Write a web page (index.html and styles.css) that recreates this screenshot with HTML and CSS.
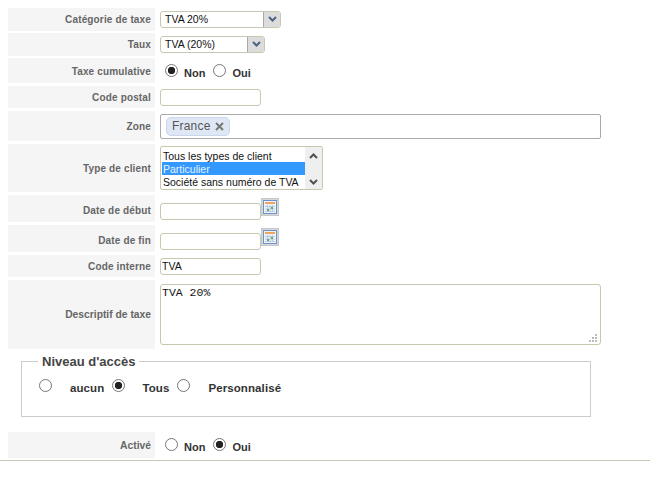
FILE: index.html
```html
<!DOCTYPE html>
<html lang="fr">
<head>
    <meta charset="UTF-8">
    <meta name="viewport" content="width=device-width, initial-scale=1.0">
    <title>Taxe</title>
    <link rel="stylesheet" href="styles.css">
</head>
<body>
    <form class="tax-form">
        <div class="row row-1">
            <label class="row-label">Catégorie de taxe</label>
            <div class="row-field">
                <div class="select select-wide"><span>TVA 20%</span>
                    <span class="select-arrow"><svg width="9" height="6" viewBox="0 0 9 6"><path d="M1 1l3.500 3.500L8 1" fill="none" stroke="#4d6185" stroke-width="2"/></svg></span>
                </div>
            </div>
        </div>
        <div class="row row-2">
            <label class="row-label">Taux</label>
            <div class="row-field">
                <div class="select select-narrow"><span>TVA (20%)</span>
                    <span class="select-arrow"><svg width="9" height="6" viewBox="0 0 9 6"><path d="M1 1l3.500 3.500L8 1" fill="none" stroke="#4d6185" stroke-width="2"/></svg></span>
                </div>
            </div>
        </div>
        <div class="row row-3">
            <label class="row-label">Taxe cumulative</label>
            <div class="row-field radios">
                <input type="radio" name="cumul" checked><span class="radio-text">Non</span>
                <input type="radio" name="cumul"><span class="radio-text">Oui</span>
            </div>
        </div>
        <div class="row row-4">
            <label class="row-label">Code postal</label>
            <div class="row-field"><input class="text-input" type="text"></div>
        </div>
        <div class="row row-5">
            <label class="row-label">Zone</label>
            <div class="row-field">
                <div class="tag-box">
                    <span class="tag">France <svg width="9" height="9" viewBox="0 0 9 9"><path d="M1 1l7 7M8 1l-7 7" stroke="#777" stroke-width="2"/></svg></span>
                </div>
            </div>
        </div>
        <div class="row row-6">
            <label class="row-label">Type de client</label>
            <div class="row-field">
                <div class="listbox">
                    <div class="list-items">
                        <div class="list-item">Tous les types de client</div>
                        <div class="list-item selected">Particulier</div>
                        <div class="list-item">Société sans numéro de TVA</div>
                    </div>
                    <div class="list-scroll">
                        <svg width="9" height="6" viewBox="0 0 9 6"><path d="M1 5l3.500-3.500L8 5" fill="none" stroke="#505050" stroke-width="2"/></svg>
                        <svg width="9" height="6" viewBox="0 0 9 6"><path d="M1 1l3.500 3.500L8 1" fill="none" stroke="#505050" stroke-width="2"/></svg>
                    </div>
                </div>
            </div>
        </div>
        <div class="row row-7">
            <label class="row-label">Date de début</label>
            <div class="row-field date-field">
                <input class="text-input" type="text">
                <span class="cal-btn"><svg width="14" height="14" viewBox="0 0 14 14"><rect x=".5" y=".5" width="13" height="13" fill="#eef3fa" stroke="#6b93c9"/><rect x="2" y="2" width="10" height="2" fill="#f2a65a"/><path d="M2 6.500h10M2 9h10M2 11.500h10M4.500 5v7M7 5v7M9.500 5v7" stroke="#b9cbe2"/><rect x="4" y="9" width="2" height="2" fill="#6aa86a"/><rect x="8" y="7" width="2" height="2" fill="#6aa86a"/></svg></span>
            </div>
        </div>
        <div class="row row-8">
            <label class="row-label">Date de fin</label>
            <div class="row-field date-field">
                <input class="text-input" type="text">
                <span class="cal-btn"><svg width="14" height="14" viewBox="0 0 14 14"><rect x=".5" y=".5" width="13" height="13" fill="#eef3fa" stroke="#6b93c9"/><rect x="2" y="2" width="10" height="2" fill="#f2a65a"/><path d="M2 6.500h10M2 9h10M2 11.500h10M4.500 5v7M7 5v7M9.500 5v7" stroke="#b9cbe2"/><rect x="4" y="9" width="2" height="2" fill="#6aa86a"/><rect x="8" y="7" width="2" height="2" fill="#6aa86a"/></svg></span>
            </div>
        </div>
        <div class="row row-9">
            <label class="row-label">Code interne</label>
            <div class="row-field"><input class="text-input" type="text" value="TVA"></div>
        </div>
        <div class="row row-10">
            <label class="row-label label-small">Descriptif de taxe</label>
            <div class="row-field area-wrap">
                <textarea class="text-area">TVA 20%</textarea>
                <svg class="area-grip" width="8" height="8" viewBox="0 0 8 8"><path d="M6 0h2v2H6zM3 3h2v2H3zM6 3h2v2H6zM0 6h2v2H0zM3 6h2v2H3zM6 6h2v2H6z" fill="#bbb"/></svg>
            </div>
        </div>

        <fieldset class="access">
            <legend>Niveau d'accès</legend>
            <div class="access-options">
                <input type="radio" name="access"><span class="access-text access-none">aucun</span>
                <input type="radio" name="access" checked><span class="access-text access-all">Tous</span>
                <input type="radio" name="access"><span class="access-text access-custom">Personnalisé</span>
            </div>
        </fieldset>

        <div class="row row-11">
            <label class="row-label label-small">Activé</label>
            <div class="row-field radios">
                <input type="radio" name="active"><span class="radio-text">Non</span>
                <input type="radio" name="active" checked><span class="radio-text">Oui</span>
            </div>
        </div>
    </form>
    <div class="bottom-line"></div>
</body>
</html>
```

FILE: styles.css
```css
body {
    margin: 0;
    padding: 0;
    background-color: #fff;
    font-family: "Liberation Sans", Arial, sans-serif;
    font-size: 12px;
    color: #333;
}

.tax-form {
    padding: 8px 0 0 8px;
}

.row {
    display: flex;
    margin-bottom: 3px;
}

.row-1 { height: 23px; margin-bottom: 2px; }
.row-2 { height: 23px; margin-bottom: 2px; }
.row-3 { height: 25px; }
.row-4 { height: 22px; }
.row-5 { height: 30px; }
.row-6 { height: 48px; }
.row-7 { height: 27px; }
.row-8 { height: 27px; }
.row-9 { height: 22px; }
.row-10 { height: 69px; margin-bottom: 0; }
.row-11 { height: 26px; margin-bottom: 0; }

.row-label {
    width: 143px;
    padding-right: 4px;
    background-color: #f5f5f5;
    color: #666;
    font-size: 10px;
    font-weight: bold;
    letter-spacing: 0.15px;
    text-align: right;
    display: flex;
    align-items: center;
    justify-content: flex-end;
}

.row-3 .row-label { padding-top: 2px; height: 23px; }
.row-7 .row-label,
.row-8 .row-label { padding-top: 3px; height: 24px; }

.label-small {
    font-size: 10.3px;
    letter-spacing: 0;
}

.row-field {
    margin-left: 5px;
    display: flex;
    align-items: center;
}

.select {
    height: 15px;
    display: flex;
    align-items: stretch;
    justify-content: space-between;
    border: 1px solid #c8c8b0;
    border-radius: 3px;
    padding-left: 4px;
    color: #111;
    font-size: 10.5px;
    line-height: 15px;
    background-color: #fff;
}

.select-wide { width: 115px; margin-top: -1px; }
.select-narrow { width: 99px; margin-top: -1px; }

.select-arrow {
    width: 16px;
    display: flex;
    align-items: center;
    justify-content: center;
    background-color: #dcdcdc;
    border-left: 1px solid #aaa;
}

.radios input,
.access-options input {
    appearance: none;
    width: 13px;
    height: 13px;
    margin: 0;
    border: 1px solid #767676;
    border-radius: 50%;
    background-color: #fff;
    flex-shrink: 0;
}

.radios input:checked,
.access-options input:checked {
    background: radial-gradient(circle, #222 0, #222 3.4px, #fff 4px);
}

.radios {
    padding-left: 5px;
}

.row-3 .radios {
    padding-top: 2px;
}

.radios input {
    position: relative;
    top: -1px;
}

.radio-text {
    margin: 3px 8px 0 6px;
    font-size: 11px;
    font-weight: bold;
    color: #333;
}

.text-input {
    width: 98px;
    height: 15px;
    padding: 0 0 0 1px;
    border: 1px solid #c8c8b0;
    border-radius: 3px;
    font-family: inherit;
    font-size: 10.5px;
    color: #111;
    outline: none;
}

.tag-box {
    width: 434px;
    height: 23px;
    display: flex;
    align-items: center;
    padding-left: 5px;
    border: 1px solid #aaa;
    border-radius: 2px;
}

.tag {
    height: 17px;
    padding: 0 5px;
    display: flex;
    align-items: center;
    gap: 4px;
    background-color: #dfe7f5;
    border: 1px solid #c9d6ee;
    border-radius: 5px;
    font-size: 12px;
    letter-spacing: 0.2px;
    color: #555;
}

.listbox {
    width: 161px;
    height: 42px;
    display: flex;
    border: 1px solid #c8c8b0;
    border-radius: 2px;
    margin-top: -1px;
}

.list-items {
    width: 143px;
    padding: 2px 0 0 1px;
}

.list-item {
    height: 13px;
    line-height: 15px;
    padding-left: 1px;
    font-size: 10.5px;
    color: #111;
    white-space: nowrap;
}

.list-item.selected {
    background-color: #3399ff;
    color: #e8f2ff;
}

.list-scroll {
    flex: 1;
    display: flex;
    flex-direction: column;
    align-items: center;
    justify-content: space-between;
    padding: 6px 0 4px;
    background-color: #efefef;
}

.date-field {
    align-items: flex-start;
}

.date-field .text-input {
    margin-top: 8px;
}

.cal-btn {
    width: 16px;
    height: 16px;
    margin-top: 3px;
    display: flex;
    align-items: center;
    justify-content: center;
    background-color: #d8d8d8;
    border: 1px solid #c8c8c8;
}

.area-wrap {
    position: relative;
    align-items: flex-start;
}

.text-area {
    display: block;
    width: 437px;
    height: 57px;
    padding: 1px;
    margin-top: 4px;
    border: 1px solid #c8c8b0;
    border-radius: 3px;
    font-family: "Liberation Mono", "Courier New", monospace;
    font-size: 11.5px;
    color: #111;
    outline: none;
    resize: none;
}

.area-grip {
    position: absolute;
    right: 4px;
    top: 54px;
}

.access {
    width: 568px;
    height: 61px;
    box-sizing: content-box;
    margin: 5px 0 15px 13px;
    padding: 0;
    border: 1px solid #ccc;
}

.access legend {
    margin-left: 16px;
    padding: 0 4px;
    font-size: 13px;
    font-weight: bold;
    color: #444;
}

.access-options {
    display: flex;
    align-items: center;
    padding: 10px 0 0 17px;
}

.access-text {
    position: relative;
    top: 2px;
    font-size: 11.5px;
    letter-spacing: 0.1px;
    font-weight: bold;
    color: #333;
}

.access-none { margin: 0 8px 0 18px; }
.access-all { margin: 0 8px 0 17px; }
.access-custom { margin-left: 18px; }

.bottom-line {
    margin-top: 2px;
    height: 1px;
    background-color: #c8c8b8;
}
```
